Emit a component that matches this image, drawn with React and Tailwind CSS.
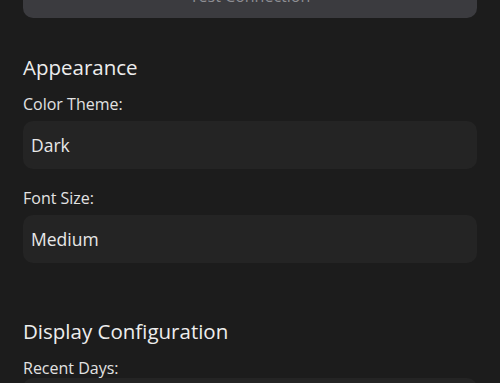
import React from 'react';

const font = { fontFamily: '"Open Sans", "Noto Sans", sans-serif' };

function Field({ label, value, className = '' }) {
    return (
        <div className={className}>
            <div className="text-[16px] leading-[20px] text-[#e2e2e2]">{label}</div>
            <div className="mt-[7px] h-[48px] rounded-[10px] bg-[#242424] px-2 flex items-center text-[17.5px] text-[#e8e8e8]">
                {value}
            </div>
        </div>
    );
}

export default function App() {
    return (
        <div className="h-[383px] overflow-hidden bg-[#1c1c1c] px-[23px]" style={font}>
            <button className="block -mt-[30px] h-12 w-full rounded-[10px] bg-[#3b3b3f] pt-[3px] text-[16px] text-[#8e8e93]">
                Test Connection
            </button>

            <h2 className="mt-[35px] text-[20.5px] leading-[28px] text-[#ededed]">Appearance</h2>
            <Field label="Color Theme:" value="Dark" className="mt-[13px]" />
            <Field label="Font Size:" value="Medium" className="mt-[19px]" />

            <h2 className="mt-[54px] text-[20.5px] leading-[28px] text-[#ededed]">Display Configuration</h2>
            <div className="mt-[13px] text-[16px] leading-[20px] text-[#e2e2e2]">Recent Days:</div>
            <div className="h-[48px] rounded-[10px] bg-[#242424]" />
        </div>
    );
}
